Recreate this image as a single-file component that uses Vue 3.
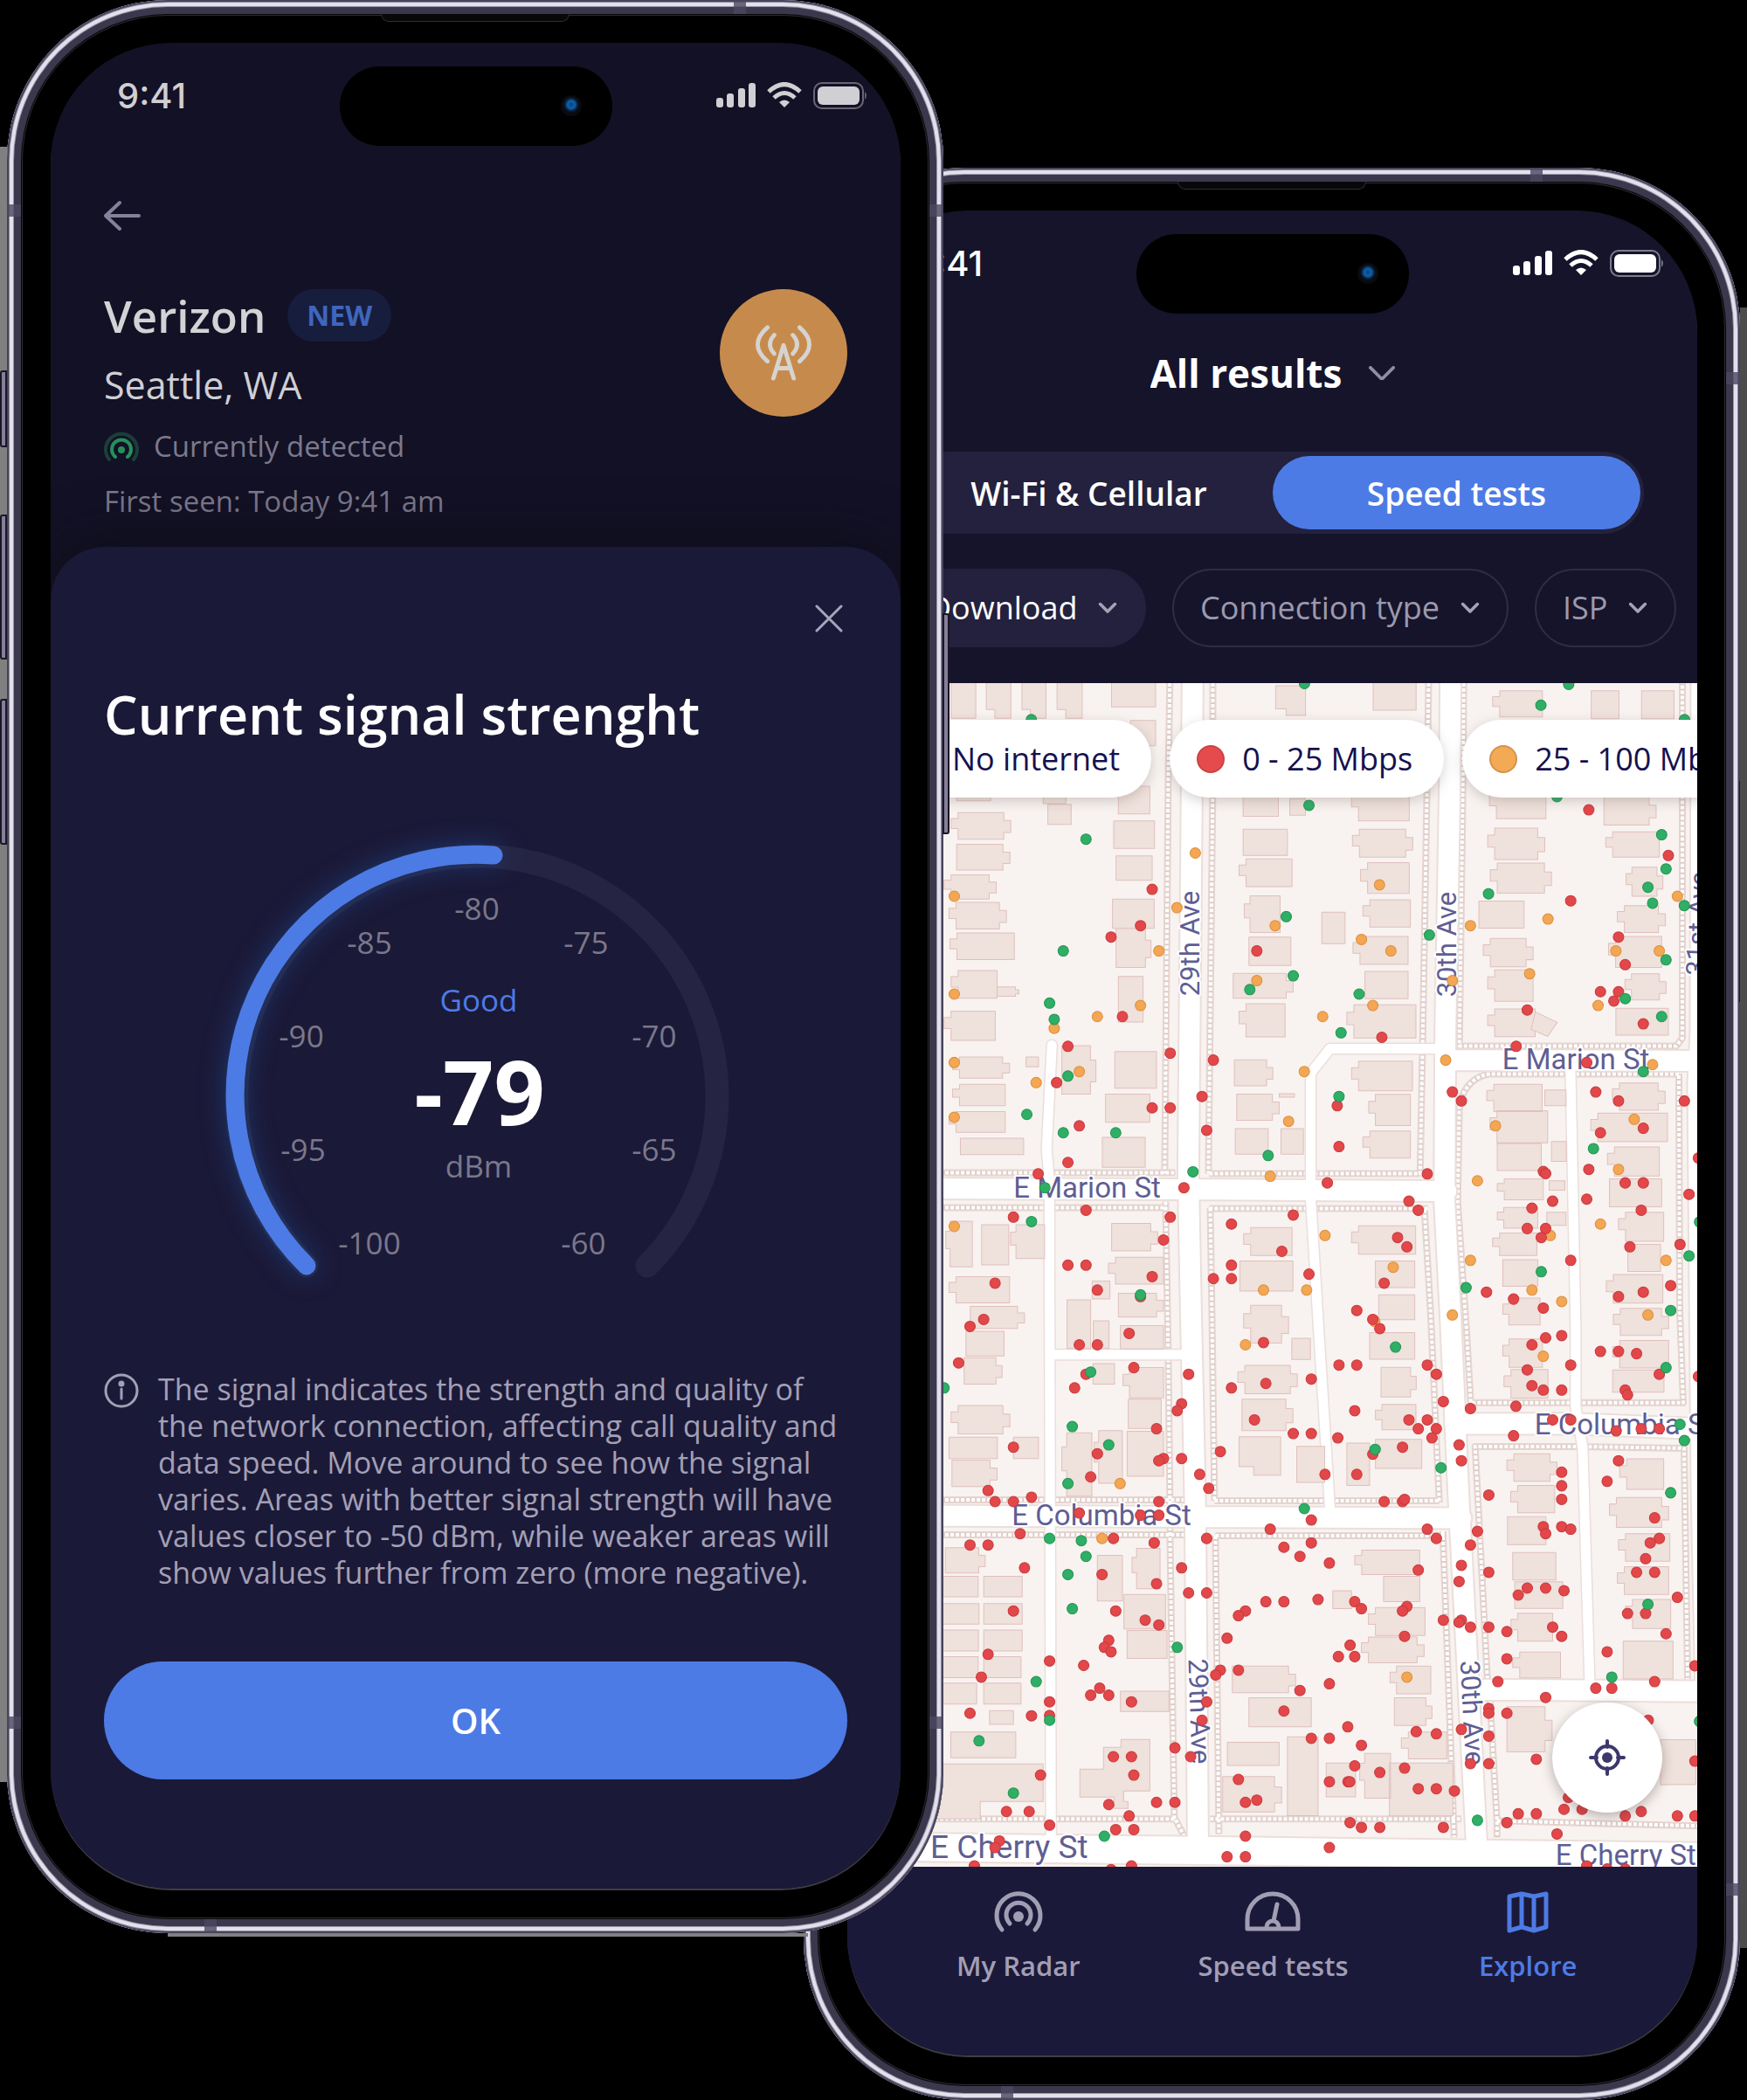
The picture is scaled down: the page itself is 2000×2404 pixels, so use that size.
<script setup>
import { ref } from 'vue'

const segment = ref('speed')
const tab = ref('explore')

const ticks = [
  { t: '-80', x: 1, y: -213 },
  { t: '-85', x: -122, y: -174 },
  { t: '-75', x: 126, y: -174 },
  { t: '-90', x: -200, y: -67 },
  { t: '-70', x: 204, y: -67 },
  { t: '-95', x: -198, y: 63 },
  { t: '-65', x: 204, y: 63 },
  { t: '-100', x: -122, y: 170 },
  { t: '-60', x: 123, y: 170 },
]

const legend = [
  { label: 'No internet', tone: 'none' },
  { label: '0 - 25 Mbps', tone: 'low' },
  { label: '25 - 100 Mbps', tone: 'mid' },
]

/* Map data is kept per sheet; every sheet has its own origin and scale. */
const sheets = [
  {
    x: 1060, y: 180, sx: 1.668, sy: 2.063,
    homes: '48,1230,95,1325 115,1230,162,1325,4 183,1230,229,1325,4 250,1230,298,1325,4 354,1230,438,1298 667,1248,724,1318,4 853,1230,935,1306 1081,1260,1176,1322,1 1269,1260,1322,1326 1365,1260,1427,1326 390,1330,438,1390',
    high: '722,1243 1226,1245 1173,1294 201,1328 1447,1328', mid: '', low: '',
  },
  {
    x: 1060, y: 900, sx: 3, sy: 2.529,
    homes: '105,0,222,42 402,0,480,50 418,52,498,110 660,0,768,80 86,76,291,153,3 644,100,784,180 105,168,288,242,2 652,201,776,272 62,256,241,326,3 79,336,276,413,3 640,326,783,411 82,424,303,501,1 652,411,772,524,2 86,533,244,613,1 244,580,319,607,2 660,550,745,682 62,650,238,735,1 466,750,583,890,2 343,783,386,811 648,767,791,873 91,783,287,844,3 91,862,272,924,1 79,941,272,1001,1 616,890,768,972 605,1015,752,1102 118,1018,335,1065 1088,0,1209,87 1248,36,1302,84 1088,124,1240,200 1074,210,1256,290,1 1092,317,1215,423,1 1108,436,1252,518 1054,541,1260,613,2 1074,629,1232,725,1 1358,364,1438,455 1058,791,1190,866,2 1066,890,1212,966,2 1212,889,1264,899 1061,990,1174,1064 1218,990,1295,1064 68,1258,159,1390,1 191,1268,284,1384 290,1268,407,1366,1 637,1264,795,1344,2 626,1362,815,1440,1 79,1418,287,1494,1 570,1431,631,1483 660,1466,815,1535,2 484,1485,565,1626 574,1546,628,1626 152,1504,338,1568,2 1090,1276,1256,1357,1 1077,1373,1259,1460 1090,1501,1244,1610,3',
    high: '549,153 1314,55 1236,377 1260,548 1111,588 471,476 424,627 440,674 487,838 346,949 471,1002 651,1002 1174,1068 916,1115 408,1161 362,1259 736,1471',
    mid: '924,193 861,351 97,318 799,476 1198,403 1135,562 97,601 440,700 588,666 736,634 97,799 526,825 378,857 97,957 1361,666 1298,825 1244,969 1181,1128 97,1273 1369,1299 1158,1457 1306,1457',
    low: '776,298 736,403 635,436 1135,476 674,666 487,752 448,857 838,772 986,792 947,897 776,930 838,930 526,982 963,995 487,1088 385,1121 885,1161 1377,1147 300,1246 549,1226 838,1246 815,1312 1260,1240 1048,1266 1221,1345 487,1385 549,1385 776,1418 588,1457 237,1437 198,1542 151,1562 1048,1385 1048,1424 986,1424 1314,1411 736,1476',
  },
  {
    x: 1530, y: 900, sx: 3, sy: 2.529,
    homes: '50,0,248,100,1 53,124,260,205,3 81,221,248,310,1 89,328,252,407,1 55,434,244,515,1 96,535,244,614 34,632,271,728,1 50,795,259,881,1 109,891,252,981,1 89,997,252,1075,1 523,0,717,94,1 517,121,713,212,3 526,222,736,309,3 487,332,642,410 502,440,673,522,3 517,531,673,622,1 517,644,680,724,1 916,30,1095,112,2 922,132,1106,205,1 992,234,1118,318,3 962,345,1127,423,3 932,434,1114,524,1 988,542,1129,618,3 957,642,1137,720 514,862,704,941,1 713,878,786,924 525,938,723,1031,1 550,1033,701,1111 736,1027,787,1085 550,1135,708,1196,1 728,1141,782,1168 550,1218,689,1278,1 720,1232,786,1270 534,1292,686,1357,1 569,1369,689,1446 569,1480,697,1558,1 945,858,1126,937,3 871,945,1134,1028,1 928,1043,1106,1127,1 935,1135,1114,1216 966,1232,1121,1316,1 998,1325,1110,1403 924,1412,1118,1495,1 948,1510,1138,1588,3 50,1271,270,1353,1 132,1373,267,1450 143,1471,267,1543',
    high: '755,30 1114,140 1129,239 520,311 1067,292 1083,338 1192,345 317,430 1129,502 76,601 989,614 14,713 1114,666 1051,825 7,897 880,1048 701,1404 443,1450 1208,1358 1244,1260 1145,1516',
    mid: '146,285 1168,318 724,384 458,403 84,443 185,476 957,476 1106,476 396,562 661,542 123,634 896,634 373,792 1083,805 544,982 1020,963 966,1108 482,1141 904,1266 732,1299 458,1371 1129,1371 193,1391 669,1457 771,1490 396,1529 1067,1529 130,1548',
    low: '864,68 1137,200 802,331 966,436 989,516 904,594 966,594 950,621 653,647 1051,687 154,726 615,752 857,799 396,884 888,884 427,910 966,910 1192,910 1051,989 904,1002 1,924 7,1042 864,1108 708,1114 716,1120 310,1121 1240,1075 989,1147 1051,1147 1208,1180 857,1194 247,1200 740,1200 279,1226 1044,1226 669,1220 653,1279 716,1279 701,1305 208,1305 240,1332 1005,1332 1177,1325 802,1371 162,1437 513,1463 606,1483 708,1509 1145,1444 1051,1463 966,1476 68,1516 123,1542',
  },
  {
    x: 1060, y: 1500, sx: 3, sy: 2.3758,
    homes: '137,55,268,122 131,127,261,199,2 86,257,288,334,3 79,343,245,401 300,343,386,401 89,405,244,477,2 667,40,815,103 573,143,647,199 676,154,815,236,1 694,240,807,319 690,327,815,449 466,331,569,503,1 577,325,674,468,1 1255,74,1319,132 1070,148,1274,225,3 1084,240,1259,325,2 1074,342,1217,446,4 1272,368,1368,466 66,643,203,712,2 0,721,179,777 198,721,330,777 0,795,182,851 198,795,330,851 0,867,180,924 198,867,330,924 0,939,179,996 198,939,326,996 0,1011,174,1068 198,1011,326,1068 218,1086,300,1123 85,1144,308,1214 588,664,674,788 707,645,803,755,1 679,770,822,864 690,868,827,944 667,1033,834,1088 1396,760,1460,809 1051,965,1268,1037,2 1108,1051,1322,1130 1034,1172,1212,1235 1240,1157,1345,1371 1018,1265,1220,1361,2 1373,1228,1474,1320',
    high: '62,209 565,166 502,314 627,364 487,469 424,618 533,624 549,667 487,716 502,809 862,914 378,1007 424,1112 182,1168 300,1310 612,1427 1298,537',
    mid: '1096,92 666,469 604,618',
    low: '526,92 588,92 697,61 1158,86 112,141 713,154 549,172 510,209 901,172 1048,209 1166,197 1322,185 877,252 862,271 1127,296 791,320 1260,333 1322,333 300,370 588,388 1010,382 565,451 815,401 799,407 877,401 939,444 1369,444 970,482 213,488 237,518 300,518 362,506 799,518 526,549 736,555 799,555 1322,568 1181,593 323,605 643,618 963,618 151,636 213,636 783,630 1228,642 1322,630 1283,667 1384,685 338,698 877,698 604,716 791,741 901,766 963,766 1166,790 1228,790 1345,784 300,815 651,815 1096,815 1072,828 752,840 799,853 1033,889 627,895 612,914 635,926 213,933 424,951 541,963 190,995 1010,976 994,989 1072,976 596,1025 565,1044 627,1044 705,1062 424,1062 963,1062 1384,1013 1283,1031 151,1093 362,1100 424,1099 947,1112 1228,1087 1322,1161 1384,1161 854,1187 643,1211 705,1211 908,1211 393,1261 713,1261 1072,1273 1384,1279 791,1335 854,1335 627,1341 1096,1335 1135,1329 276,1360 354,1360 697,1372 424,1397 651,1409 713,1409 1096,1427 252,1440 237,1458 1384,1458 1033,1483 1096,1483 166,1508 705,1508 635,1518',
  },
  {
    x: 1530, y: 1500, sx: 3, sy: 2.3758,
    homes: '112,59,267,131 151,153,272,234,2 132,254,271,323,1 34,359,112,474 132,349,291,428 569,76,705,153,1 573,159,724,237,1 946,80,1138,155,1 946,160,1122,221 61,650,284,716,1 160,721,284,790 108,806,302,882,1 84,886,299,956,3 182,965,322,1040,1 197,1051,326,1126,2 221,1144,377,1217,1 180,1228,398,1372 78,1202,184,1324,1 583,388,755,463,3 596,474,747,548,1 585,559,717,635 603,656,751,731 610,736,775,808 597,821,740,897,1 603,927,767,997,1 583,1075,738,1198,2 970,402,1121,485,1 935,507,1138,588,3 966,605,1142,680,1 962,695,1138,770,1 990,784,1145,863,1 982,897,1153,1000 1110,1165,1231,1287',
    high: '201,98 1129,154 131,376 357,426 1177,308 1192,352 1145,494 1067,797 943,995 482,1384 1244,1115',
    mid: '708,123 240,995',
    low: '147,48 716,73 771,67 669,92 904,110 966,110 1028,116 7,147 68,147 310,147 341,172 653,160 802,147 1106,172 1240,178 669,203 708,215 771,215 989,215 997,228 365,246 614,259 458,265 61,271 247,296 310,296 279,320 341,320 326,345 740,296 802,296 958,326 1044,320 1106,320 606,339 3,345 225,370 123,389 419,364 427,407 966,407 68,444 771,438 771,475 771,512 927,463 521,500 162,518 225,518 232,512 708,586 716,605 771,586 802,593 1090,562 310,593 341,618 482,599 458,636 1106,618 1075,630 1059,673 1028,710 1090,710 427,691 279,704 521,710 419,735 653,753 716,753 622,772 779,760 1168,778 61,790 84,809 240,803 225,815 997,822 1059,822 365,840 427,840 419,846 458,859 521,859 740,859 583,871 771,884 1129,877 232,884 45,908 927,926 5,939 61,939 583,945 1228,964 552,1007 1090,1007 888,1025 943,1025 716,1050 521,1080 521,1093 583,1093 1068,1112 37,1130 427,1137 272,1143 341,1149 521,1155 84,1180 684,1218 458,1230 521,1230 61,1236 232,1242 147,1254 1228,1223 38,1279 44,1279 279,1298 341,1298 403,1304 794,1322 779,1354 841,1354 622,1366 684,1366 583,1390 45,1390 84,1403 147,1403 365,1403 989,1372 1044,1360 1168,1372 1228,1372 755,1421 857,1508 927,1516 989,1516',
  },
]

const parse = (s) => (s ? s.split(' ').map((p) => p.split(',').map(Number)) : [])

/* Outline flags: 1 = porch on the left, 2 = porch on the right, 4 = cut lower left corner. */
function outline(a, b, c, d, k = 0) {
  const w = c - a
  const h = d - b
  const p = Math.min(8, w * 0.16)
  const l = k & 1 ? a + p : a
  const r = k & 2 ? c - p : c
  let s = `M${l} ${b}H${r}`
  if (k & 2) s += `V${b + h * 0.3}H${c}V${b + h * 0.75}H${r}`
  s += `V${d}`
  s += k & 4 ? `H${a + w * 0.35}V${b + h * 0.78}H${a}` : `H${l}`
  if (k & 1) s += `V${b + h * 0.6}H${a}V${b + h * 0.22}H${l}`
  return s + 'Z'
}

const homes = sheets
  .flatMap((m) =>
    parse(m.homes).map(([a, b, c, d, k]) =>
      outline(m.x + a / m.sx, m.y + b / m.sy, m.x + c / m.sx, m.y + d / m.sy, k)
    )
  )
  .join('')

const results = ['mid', 'low', 'high'].flatMap((tone) =>
  sheets.flatMap((m) => parse(m[tone]).map(([u, v]) => ({ tone, x: m.x + u / m.sx, y: m.y + v / m.sy })))
)

const avenues =
  'M1365 770L1364 900L1360 1340L1361 1400L1363 1500L1368 1730L1371 2110' +
  'M1660 770L1659 900L1654 1180L1653 1375L1660 1510L1669 1710L1690 2115' +
  'M1947 770L1946 1180L1943 1240L1947 1700L1952 1940' +
  'M1040 1360L1360 1361L1655 1363M1654 1213L1950 1214M1040 1734L1672 1737' +
  'M1665 1629L1800 1629L1950 1635M1692 1933L1950 1935'
const alleys =
  'M1204 1196L1198 1315L1201 1350L1203 2110' +
  'M1642 1200H1522L1500 1228V1372L1509 1520L1522 1727M1203 1550H1358' +
  'M1797 1220L1803 1520V1610L1811 1656L1819 1925'
const walks = [
  'M1339 770L1337 900L1333 1343', 'M1334 1375L1337 1550L1339 1719V1755L1344 2081',
  'M1388 770L1388 900L1383 1343', 'M1385 1382L1387 1500L1390 1717', 'M1391 1757L1395 2098',
  'M1635 770L1633 900L1628 1193L1625 1347', 'M1630 1384L1637 1500L1647 1719', 'M1651 1752L1664 2102',
  'M1675 770L1674 900L1670 1197H1918L1925 1188V770',
  'M1921 1229H1705Q1680 1232 1670 1262L1668 1375L1678 1520L1683 1605H1926L1922 1500L1921 1229',
  'M1702 1921L1688 1655L1803 1655L1927 1657L1931 1921', 'M1705 1946L1713 2083L1713 2102', 'M1713 2083L1950 2089',
  'M1040 1342H1345', 'M1040 1382H1335', 'M1384 1343H1630', 'M1384 1383H1634',
  'M1040 1716H1355', 'M1040 1756H1355', 'M1390 1717H1647', 'M1391 1757H1655',
  'M1040 2081H1345L1355 2100', 'M1385 2081H1672',
].join('')

const streets = [
  { t: 'E Marion St', x: 1160, y: 1370, s: 33 },
  { t: 'E Marion St', x: 1719, y: 1224, s: 33 },
  { t: 'E Columbia St', x: 1158, y: 1745, s: 33 },
  { t: 'E Columbia St', x: 1756, y: 1641, s: 33 },
  { t: 'E Cherry St', x: 1065, y: 2126, s: 37 },
  { t: 'E Cherry St', x: 1780, y: 2134, s: 33 },
  { t: '29th Ave', x: 1373, y: 1140, s: 31, r: -90 },
  { t: '30th Ave', x: 1666, y: 1141, s: 31, r: -90 },
  { t: '31st Ave', x: 1951, y: 1117, s: 31, r: -88 },
  { t: '29th Ave', x: 1360, y: 1898, s: 31, r: 88 },
  { t: '30th Ave', x: 1671, y: 1900, s: 31, r: 87 },
]
</script>

<template>
  <main class="stage">
    <section class="phone phone-front" aria-label="Signal strength">
      <i class="key key-action"></i><i class="key key-up"></i><i class="key key-down"></i><i class="key key-power"></i>
      <i class="band band-top"></i><i class="band band-bottom"></i>
      <i class="band side left high"></i><i class="band side right high"></i>
      <i class="band side left deep"></i><i class="band side right deep"></i>
      <i class="speaker"></i>
      <div class="screen detail">
        <div class="island"><i class="lens"></i></div>
        <div class="status">
          <span class="time">9:41</span>
          <svg class="glyphs" viewBox="0 0 176 32" aria-hidden="true">
            <g fill="currentColor">
              <rect x="0" y="18" width="8" height="11" rx="3" /><rect x="12" y="13" width="8" height="16" rx="3" />
              <rect x="25" y="7" width="8" height="22" rx="3" /><rect x="37" y="1" width="8" height="28" rx="3" />
              <rect x="116" y="5" width="48" height="21" rx="6" />
              <path d="M78 29l-6-6q6-5 12 0z" /><path d="M170 11q4 4 0 9z" opacity=".45" />
            </g>
            <g fill="none" stroke="currentColor" stroke-width="5">
              <path d="M60 11Q78-6 96 11M66 18Q78 7 90 18" />
              <rect x="112" y="1" width="56" height="29" rx="9" stroke-width="2" opacity=".45" />
            </g>
          </svg>
        </div>
        <button class="back" type="button" aria-label="Back">
          <svg viewBox="0 0 42 36"><path d="M40 18H2M18 3L2 18l16 15" /></svg>
        </button>
        <header class="network">
          <div class="facts">
            <div class="name"><h1>Verizon</h1><span class="badge">NEW</span></div>
            <p class="place">Seattle, WA</p>
            <p class="seen">
              <svg viewBox="0 0 40 36" aria-hidden="true">
                <path d="M6 33A18 18 0 1 1 34 33" stroke="#1b3f3b" />
                <path d="M13 30A11 11 0 1 1 27 30" stroke="#25915a" />
                <circle cx="20" cy="22" r="4" fill="#25915a" />
              </svg>
              Currently detected
            </p>
            <p class="first">First seen: Today 9:41 am</p>
          </div>
          <div class="mast">
            <svg viewBox="0 0 66 66" aria-hidden="true">
              <path d="M21 63L33 24l12 39M25 51h16M14 3Q-9 23 14 43M52 3Q75 23 52 43M22 12Q12 23 22 34M44 12Q54 23 44 34" />
            </svg>
          </div>
        </header>

        <div class="sheet" role="dialog" aria-labelledby="sheet-title">
          <button class="close" type="button" aria-label="Close">
            <svg viewBox="0 0 32 32"><path d="M2 2l28 28M30 2L2 30" /></svg>
          </button>
          <h2 id="sheet-title">Current signal strenght</h2>
          <svg class="gauge" viewBox="-300 -300 600 520">
            <path class="track" d="M-194 195A275 275 0 1 1 196 195" />
            <path class="value" d="M-194 195A275 275 0 0 1 20 -275" />
            <text v-for="k in ticks" :key="k.t" class="tick" :x="k.x" :y="k.y + 12">{{ k.t }}</text>
            <text class="grade" x="3" y="-96">Good</text>
            <text class="reading" x="4" y="34">-79</text>
            <text class="tick" x="3" y="94">dBm</text>
          </svg>
          <div class="note">
            <svg viewBox="0 0 40 40" aria-hidden="true">
              <circle cx="20" cy="20" r="18" /><path d="M20 18v11" /><circle class="fill" cx="20" cy="12" r="2" />
            </svg>
            <p>
              The signal indicates the strength and quality of<br />the network connection, affecting call quality and<br />data
              speed. Move around to see how the signal<br />varies. Areas with better signal strength will have<br />values
              closer to -50 dBm, while weaker areas will<br />show values further from zero (more negative).
            </p>
          </div>
          <button class="ok" type="button">OK</button>
        </div>
      </div>
    </section>

    <section class="phone phone-back" aria-label="Explore results">
      <i class="key key-power"></i>
      <i class="band band-top"></i><i class="band band-bottom"></i>
      <i class="band side right high"></i><i class="band side right deep"></i>
      <i class="speaker"></i>
      <div class="screen explore">
        <div class="island"><i class="lens"></i></div>
        <div class="status">
          <span class="time">9:41</span>
          <svg class="glyphs" viewBox="0 0 176 32" aria-hidden="true">
            <g fill="currentColor">
              <rect x="0" y="18" width="8" height="11" rx="3" /><rect x="12" y="13" width="8" height="16" rx="3" />
              <rect x="25" y="7" width="8" height="22" rx="3" /><rect x="37" y="1" width="8" height="28" rx="3" />
              <rect x="116" y="5" width="48" height="21" rx="6" />
              <path d="M78 29l-6-6q6-5 12 0z" /><path d="M170 11q4 4 0 9z" opacity=".45" />
            </g>
            <g fill="none" stroke="currentColor" stroke-width="5">
              <path d="M60 11Q78-6 96 11M66 18Q78 7 90 18" />
              <rect x="112" y="1" width="56" height="29" rx="9" stroke-width="2" opacity=".45" />
            </g>
          </svg>
        </div>
        <label class="scope">
          <select aria-label="Result set"><option>All results</option></select>
          <svg viewBox="0 0 32 18" aria-hidden="true"><path d="M2 2l14 14L30 2" /></svg>
        </label>
        <div class="segments">
          <button type="button" :class="{ on: segment === 'radio' }" @click="segment = 'radio'">Wi-Fi &amp; Cellular</button>
          <button type="button" :class="{ on: segment === 'speed' }" @click="segment = 'speed'">Speed tests</button>
        </div>
        <div class="filters">
          <label class="filter filled">
            <select aria-label="Direction"><option>Download</option></select>
            <svg viewBox="0 0 20 14" aria-hidden="true"><path d="M3 3l7 7 7-7" /></svg>
          </label>
          <label class="filter">
            <select aria-label="Connection type"><option>Connection type</option></select>
            <svg viewBox="0 0 20 14" aria-hidden="true"><path d="M3 3l7 7 7-7" /></svg>
          </label>
          <label class="filter">
            <select aria-label="ISP"><option>ISP</option></select>
            <svg viewBox="0 0 20 14" aria-hidden="true"><path d="M3 3l7 7 7-7" /></svg>
          </label>
        </div>
        <div class="map">
          <svg class="ground" viewBox="970 782 972 1354">
            <rect x="970" y="782" width="980" height="1354" fill="#f8f3f0" />
            <path class="walk-edge" :d="walks" /><path class="walk-bed" :d="walks" /><path class="walk" :d="walks" />
            <path class="case wide" :d="avenues" /><path class="case thin" :d="alleys" />
            <path class="case cherry" d="M1030 2113L1375 2117L1950 2124" />
            <path class="road wide" :d="avenues" /><path class="road thin" :d="alleys" />
            <path class="road cherry" d="M1030 2113L1375 2117L1950 2124" />
            <path class="home" :d="homes" />
            <path
              class="home"
              d="M1236 2024h27v-25h20v-9h33v59h-30v12h5v8h-16v-13h-39zM1757 1158l25 12-11 16-19-8zM1060 2018h134v43h-72v20h-62z"
            />
            <text
              v-for="(s, i) in streets"
              :key="i"
              class="street"
              :font-size="s.s"
              :transform="`translate(${s.x} ${s.y}) rotate(${s.r || 0})`"
            >{{ s.t }}</text>
            <circle v-for="(p, i) in results" :key="'p' + i" :class="['pin', p.tone]" :cx="p.x" :cy="p.y" r="6" />
          </svg>
          <ul class="legend">
            <li v-for="l in legend" :key="l.label"><i :class="l.tone"></i>{{ l.label }}</li>
          </ul>
          <button class="locate" type="button" aria-label="My location">
            <svg viewBox="0 0 42 42">
              <circle cx="21" cy="21" r="13" /><path d="M21 2v7M21 33v7M2 21h7M33 21h7" /><circle class="fill" cx="21" cy="21" r="6" />
            </svg>
          </button>
        </div>
        <nav class="tabs">
          <a href="#radar" :class="{ on: tab === 'radar' }" @click.prevent="tab = 'radar'">
            <svg viewBox="0 0 64 48" aria-hidden="true">
              <path d="M13 44A25 25 0 1 1 51 44" /><path d="M22 37A14 14 0 1 1 42 37" /><circle class="fill" cx="32" cy="29" r="6" />
            </svg>
            My Radar
          </a>
          <a href="#speed" :class="{ on: tab === 'speed' }" @click.prevent="tab = 'speed'">
            <svg viewBox="0 0 64 48" aria-hidden="true">
              <path d="M3 43V32a29 29 0 0 1 58 0v11zM25 43v-2a7 7 0 0 1 14 0v2M33 34l4-19" />
            </svg>
            Speed tests
          </a>
          <a href="#explore" :class="{ on: tab === 'explore' }" @click.prevent="tab = 'explore'">
            <svg viewBox="0 0 64 48" aria-hidden="true">
              <path d="M11 6l14-3 14 3 14-3v38l-14 4-14-4-14 4zM25 3v38M39 6v39" />
            </svg>
            Explore
          </a>
        </nav>
      </div>
    </section>
  </main>
</template>

<style>
body {
  margin: 0;
  background: #000;
}
</style>

<style scoped>
.stage {
  position: relative;
  display: grid;
  grid-template-columns: 8fr 912fr 160fr 912fr 8fr;
  align-items: start;
  overflow: hidden;
  background: #000;
  font-family: "Open Sans", "Noto Sans", sans-serif;
  color: #fff;
}
.stage::before,
.stage::after {
  content: "";
  position: absolute;
  width: 8px;
}
.stage::before {
  left: 0;
  top: 168px;
  bottom: 364px;
  background: #808080;
}
.stage::after {
  right: 0;
  top: 352px;
  bottom: 174px;
  background: #4c4c4c;
}
h1, h2, p, ul {
  margin: 0;
  padding: 0;
}
button, select {
  font: inherit;
  color: inherit;
  border: 0;
  padding: 0;
  background: none;
  cursor: pointer;
}
svg {
  display: block;
  fill: none;
  stroke-linecap: round;
  stroke-linejoin: round;
}

.phone {
  position: relative;
  grid-row: 1;
  box-sizing: border-box;
  padding: 49px 49px 51px 50px;
  border-radius: 184px;
  background: #000;
  box-shadow:
    inset 0 0 0 2px #47435b,
    inset 0 0 0 3px #8e8a9e,
    inset 0 0 0 7px #e3e0ec,
    inset 0 0 0 8px #9a96aa,
    inset 0 0 0 16px #3b374c,
    inset 0 0 0 17px #050507,
    inset 0 0 0 18px #2c2c30;
}
.phone-front {
  grid-column: 2 / 4;
  z-index: 1;
}
.phone-front::after {
  content: "";
  position: absolute;
  left: 184px;
  right: 155px;
  bottom: -4px;
  height: 4px;
  background: #808080;
}
.phone-back {
  grid-column: 3 / 5;
  margin-top: 192px;
}
.key {
  position: absolute;
  left: -8px;
  box-sizing: border-box;
  width: 8px;
  border: 2px solid #1a1724;
  border-radius: 3px 0 0 3px;
  background: #857f9a;
}
.key-action { top: 424px; height: 88px; }
.key-up { top: 589px; height: 166px; }
.key-down { top: 800px; height: 167px; }
.key-power {
  left: auto;
  right: -7px;
  top: 702px;
  height: 253px;
  border-radius: 0 3px 3px 0;
}
.band {
  position: absolute;
  background: #4b4760;
  opacity: .8;
}
.band-top { top: 0; right: 226px; width: 14px; height: 16px; }
.band-bottom { bottom: 0; left: 226px; width: 14px; height: 16px; }
.side { width: 16px; height: 14px; }
.left { left: 0; }
.right { right: 0; }
.high { top: 234px; }
.deep { bottom: 234px; }
.speaker {
  position: absolute;
  top: 16px;
  left: 50%;
  width: 214px;
  height: 8px;
  margin-left: -108px;
  border: 1px solid #2e2e33;
  border-top: 0;
  border-radius: 0 0 10px 10px;
  background: #08080a;
}
.screen {
  position: relative;
  border-radius: 138px;
  overflow: hidden;
}
.detail {
  background: #131125;
  box-shadow: 0 2px 0 #3d3d44;
}
.explore {
  background: #15142b;
  box-shadow: 0 2px 0 #3d3d44;
}
.island {
  position: absolute;
  top: 27px;
  left: 50%;
  width: 312px;
  height: 91px;
  margin-left: -156px;
  border-radius: 46px;
  background: #000;
}
.lens {
  position: absolute;
  right: 35px;
  top: 33px;
  width: 24px;
  height: 24px;
  border-radius: 50%;
  background: radial-gradient(circle at 50% 45%, #0a3f70 0, #0d63b0 24%, #06213f 40%, #0a0a0f 52%);
}
.status {
  display: flex;
  align-items: center;
  justify-content: space-between;
  height: 122px;
  padding: 0 35px 0 76px;
}
.time {
  font: 500 40px/48px Inter, sans-serif;
}
.glyphs {
  width: 176px;
  height: 32px;
  stroke-linecap: butt;
}
.detail .status {
  color: #d0cfd3;
}

.back {
  display: flex;
  align-items: center;
  height: 60px;
  margin: 46px 0 0 61px;
}
.back svg {
  width: 42px;
  stroke: #85819a;
  stroke-width: 4;
}
.network {
  display: flex;
  justify-content: space-between;
  align-items: flex-start;
  padding: 54px 61px 30px 61px;
}
.name {
  display: flex;
  align-items: center;
  gap: 25px;
  height: 60px;
}
h1 {
  font-size: 51px;
  font-weight: 600;
  line-height: 60px;
  color: #d3d3d5;
}
.badge {
  padding: 0 22px;
  border-radius: 30px;
  background: #171d3c;
  color: #3f66bd;
  font-size: 32px;
  font-weight: 700;
  line-height: 60px;
}
.place {
  margin-top: 20px;
  font-size: 43px;
  line-height: 60px;
  color: #d0cfd4;
}
.seen {
  display: flex;
  align-items: center;
  gap: 17px;
  margin-top: 18px;
}
.seen svg {
  width: 40px;
  stroke-width: 4;
}
.seen,
.first {
  font-size: 33px;
  line-height: 44px;
  color: #7c798c;
}
.first {
  margin-top: 19px;
}
.mast {
  display: flex;
  align-items: center;
  justify-content: center;
  width: 146px;
  height: 146px;
  border-radius: 50%;
  background: #c68b4c;
}
.mast svg {
  width: 64px;
  stroke: #d6d3d1;
  stroke-width: 5;
}

.sheet {
  position: relative;
  display: flex;
  flex-direction: column;
  padding: 60px 61px 125px 61px;
  border-radius: 62px 62px 0 0;
  background: #1b1938;
  box-shadow: 0 -10px 60px rgba(12, 12, 20, .6);
}
.close {
  align-self: flex-end;
  width: 42px;
  height: 44px;
}
.close svg {
  width: 32px;
  margin: 0 auto;
  stroke: #a8a5bb;
  stroke-width: 3;
}
h2 {
  margin-top: 48px;
  font-size: 61px;
  font-weight: 600;
  line-height: 80px;
}
.gauge {
  align-self: center;
  width: 100%;
  max-width: 600px;
  margin-top: 96px;
  overflow: visible;
}
.track {
  stroke: #262443;
  stroke-width: 27;
}
.value {
  stroke: #4d7be5;
  stroke-width: 21;
  filter: drop-shadow(0 0 14px rgba(30, 90, 170, .5));
}
.gauge text {
  text-anchor: middle;
}
.tick {
  fill: #7a788a;
  font-size: 35px;
}
.grade {
  fill: #4d7be5;
  font-size: 35px;
}
.reading {
  fill: #fff;
  font-size: 102px;
  font-weight: 700;
}
.note {
  display: flex;
  gap: 22px;
  margin-top: 95px;
  font-size: 34px;
  line-height: 42px;
  color: #a3a0b6;
}
.note svg {
  flex: none;
  width: 40px;
  height: 40px;
  margin-top: 3px;
  stroke: #a3a0b6;
  stroke-width: 3;
}
.note .fill {
  fill: #a3a0b6;
}
.note p {
  white-space: nowrap;
}
.ok {
  margin-top: 81px;
  border-radius: 68px;
  background: #4d7be5;
  font-size: 40px;
  font-weight: 600;
  line-height: 135px;
}

.scope {
  display: flex;
  align-items: center;
  justify-content: center;
  gap: 30px;
  height: 60px;
  margin-top: 34px;
  font-size: 44px;
  font-weight: 700;
}
select {
  appearance: none;
  height: 60px;
  line-height: 60px;
  outline: 0;
}
.scope svg {
  width: 30px;
  stroke: #8f8ca3;
  stroke-width: 4;
}
.segments {
  display: grid;
  grid-template-columns: 1fr 1fr;
  margin: 60px 61px 0 62px;
  padding: 5px 4px;
  border-radius: 47px;
  background: #23213e;
  font-size: 37px;
  font-weight: 600;
}
.segments button {
  height: 84px;
  border-radius: 42px;
}
.segments .on {
  background: #4d7be5;
}
.filters {
  display: flex;
  gap: 30px;
  padding: 40px 0 41px 61px;
  font-size: 36px;
}
.filter {
  flex: none;
  display: flex;
  align-items: center;
  gap: 22px;
  box-sizing: border-box;
  height: 90px;
  padding: 0 30px;
  border: 2px solid #2e2c47;
  border-radius: 45px;
  color: #9c99ae;
}
.filled {
  border-color: #23213e;
  background: #23213e;
  color: #fff;
}
.filter svg {
  width: 24px;
  stroke: #a5a2b6;
  stroke-width: 3;
}

.map {
  position: relative;
}
.ground {
  width: 100%;
}
.case { stroke: #ebdedb; }
.road { stroke: #fff; }
.wide.case { stroke-width: 27; }
.wide.road { stroke-width: 23; }
.thin.case { stroke-width: 14; }
.thin.road { stroke-width: 11; }
.cherry.case { stroke-width: 35; }
.cherry.road { stroke-width: 31; }
.walk-edge {
  stroke: #e8d5d1;
  stroke-width: 8;
  stroke-linecap: butt;
}
.walk-bed {
  stroke: #dccdc8;
  stroke-width: 5;
  stroke-linecap: butt;
}
.walk {
  stroke: #fff;
  stroke-width: 4;
  stroke-linecap: butt;
  stroke-dasharray: 4 2;
}
.home {
  fill: #efe1db;
  stroke: #e0c0be;
  stroke-width: 1;
}
.street {
  font-family: Roboto, sans-serif;
  fill: #5f5e93;
  stroke: #fff;
  stroke-width: 4;
  paint-order: stroke;
}
.pin { stroke-width: 1; }
.pin.low { fill: #e2474a; stroke: #c9393d; }
.pin.mid { fill: #f3a653; stroke: #dd8f3c; }
.pin.high { fill: #2fae66; stroke: #219553; }
.legend {
  position: absolute;
  top: 42px;
  left: 37px;
  right: 0;
  display: flex;
  gap: 21px;
  list-style: none;
}
.legend li {
  flex: none;
  display: flex;
  align-items: center;
  gap: 20px;
  height: 89px;
  padding: 0 36px 0 31px;
  border-radius: 45px;
  background: #fff;
  box-shadow: 0 4px 14px rgba(90, 70, 70, .25);
  color: #15114f;
  font-size: 36px;
  line-height: 89px;
}
.legend i {
  box-sizing: border-box;
  width: 32px;
  height: 32px;
  border: 2px solid #77758a;
  border-radius: 50%;
  background: #8c8a9e;
}
.legend .low { background: #e54b4d; border-color: #cb4345; }
.legend .mid { background: #f4a955; border-color: #d3934d; }
.locate {
  position: absolute;
  right: 40px;
  bottom: 62px;
  display: flex;
  align-items: center;
  justify-content: center;
  width: 126px;
  height: 126px;
  border-radius: 50%;
  background: #fff;
  box-shadow: 0 4px 14px rgba(60, 40, 40, .35);
}
.locate svg {
  width: 42px;
  stroke: #3c386b;
  stroke-width: 4;
}
.locate .fill {
  fill: #3c386b;
  stroke: none;
}
.tabs {
  display: grid;
  grid-template-columns: repeat(3, 1fr);
  padding: 28px 48px 80px 50px;
  background: #1b1939;
}
.tabs a {
  display: flex;
  flex-direction: column;
  align-items: center;
  gap: 15px;
  color: #a19eb4;
  font-size: 31px;
  font-weight: 600;
  line-height: 45px;
  text-decoration: none;
}
.tabs .on {
  color: #4d7be5;
}
.tabs svg {
  width: 64px;
  stroke: currentColor;
  stroke-width: 5;
}
.tabs .fill {
  fill: currentColor;
  stroke: none;
}
</style>
